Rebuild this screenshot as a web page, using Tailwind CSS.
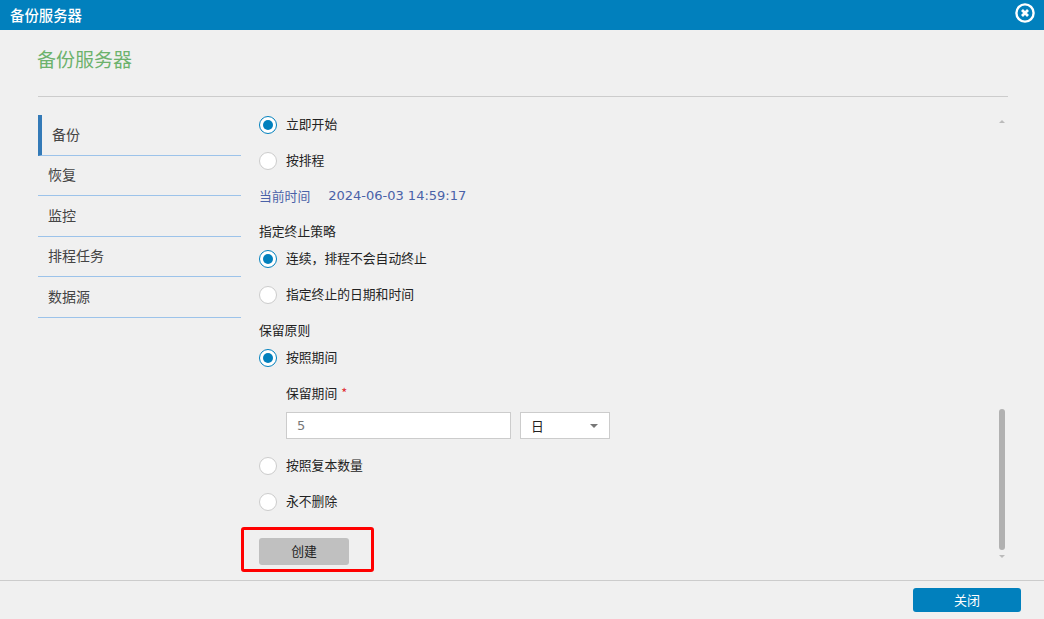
<!DOCTYPE html>
<html lang="zh-CN">
<head>
<meta charset="utf-8">
<title>备份服务器</title>
<script src="https://cdn.jsdelivr.net/npm/@tailwindcss/browser@4"></script>
</head>
<body class="w-[1044px] h-[619px] overflow-hidden bg-[#f0f0f0] text-[#222] text-[12.8px] font-['Noto_Sans_CJK_SC',sans-serif] flex flex-col">
  <!-- Title bar -->
  <header class="h-[30px] shrink-0 bg-[#0180bd] flex items-center justify-between pl-[10px] pr-[9px] text-white text-[14.4px] font-medium">
    <span class="leading-[30px]">备份服务器</span>
    <svg class="w-5 h-5 -mt-[5px]" viewBox="0 0 20 20" fill="none" stroke="#fff">
      <circle cx="10" cy="10" r="8.6" stroke-width="2.4"/>
      <path d="M7 7l6 6M13 7l-6 6" stroke-width="2.8"/>
    </svg>
  </header>

  <div class="flex-1 min-h-0 pl-[38px] pr-[36px]">
    <h1 class="h-[67px] border-b border-[#ccc] pt-[14px] text-[19px] leading-[30px] text-[#6cb26c]"><span class="-ml-px">备份服务器</span></h1>

    <div class="flex relative">
      <!-- Side nav -->
      <nav class="w-[203px] shrink-0 mt-[18px] text-[14px] text-[#444] self-start">
        <a class="flex items-center h-[41px] pl-[10px] pb-[2px] border-l-4 border-l-[#337ab7] border-b border-b-[#9cc3ea]">备份</a>
        <a class="flex items-center h-[40px] pl-[10px] pb-[2px] border-b border-[#9cc3ea]">恢复</a>
        <a class="flex items-center h-[41px] pl-[10px] pb-[2px] border-b border-[#9cc3ea]">监控</a>
        <a class="flex items-center h-[40px] pl-[10px] pb-[2px] border-b border-[#9cc3ea]">排程任务</a>
        <a class="flex items-center h-[41px] pl-[10px] pb-[2px] border-b border-[#9cc3ea]">数据源</a>
      </nav>

      <!-- Form -->
      <section class="pl-[18px] pt-[9px] flex-1">
        <label class="flex items-center gap-[9px] h-[36px]">
          <span class="mt-[2px] w-[18px] h-[18px] rounded-full border border-[#0180bd] bg-white flex items-center justify-center"><span class="w-[10px] h-[10px] rounded-full bg-[#0180bd]"></span></span>
          <span>立即开始</span>
        </label>
        <label class="flex items-center gap-[9px] h-[36px]">
          <span class="mt-[2px] w-[18px] h-[18px] rounded-full border border-[#ccc] bg-white"></span>
          <span>按排程</span>
        </label>
        <div class="flex items-center h-[36px] text-[#4a62a8]">
          <span>当前时间</span>
          <span class="ml-[18px] font-['DejaVu_Sans',sans-serif] text-[13px]">2024-06-03 14:59:17</span>
        </div>

        <div class="mt-[4px] h-[26px] flex items-center">指定终止策略</div>
        <label class="flex items-center gap-[9px] h-[28px]">
          <span class="mt-[2px] w-[18px] h-[18px] rounded-full border border-[#0180bd] bg-white flex items-center justify-center"><span class="w-[10px] h-[10px] rounded-full bg-[#0180bd]"></span></span>
          <span>连续，排程不会自动终止</span>
        </label>
        <label class="flex items-center gap-[9px] h-[28px] mt-[8px]">
          <span class="mt-[2px] w-[18px] h-[18px] rounded-full border border-[#ccc] bg-white"></span>
          <span>指定终止的日期和时间</span>
        </label>

        <div class="mt-[8px] h-[28px] flex items-center">保留原则</div>
        <label class="flex items-center gap-[9px] h-[26px]">
          <span class="mt-[2px] w-[18px] h-[18px] rounded-full border border-[#0180bd] bg-white flex items-center justify-center"><span class="w-[10px] h-[10px] rounded-full bg-[#0180bd]"></span></span>
          <span>按照期间</span>
        </label>

        <div class="pl-[27px] mt-[10px]">
          <div class="h-[26px] flex items-center gap-[4px]">保留期间 <span class="text-[#e0262a]">*</span></div>
          <div class="flex gap-[9px] mt-[6px]">
            <input value="5" class="w-[225px] h-[27px] border border-[#ccc] bg-white px-[10px] text-[13px] text-[#777] font-['DejaVu_Sans',sans-serif]">
            <div class="w-[90px] h-[27px] border border-[#ccc] bg-white flex items-center justify-between pl-[10px] pr-[11px]">
              <span>日</span>
              <span class="w-0 h-0 border-x-[4px] border-x-transparent border-t-[4px] border-t-[#777]"></span>
            </div>
          </div>
        </div>

        <label class="flex items-center gap-[9px] h-[36px] mt-[8px]">
          <span class="mt-[2px] w-[18px] h-[18px] rounded-full border border-[#ccc] bg-white"></span>
          <span>按照复本数量</span>
        </label>
        <label class="flex items-center gap-[9px] h-[36px]">
          <span class="mt-[2px] w-[18px] h-[18px] rounded-full border border-[#ccc] bg-white"></span>
          <span>永不删除</span>
        </label>

        <div class="relative mt-[19px] w-[90px]">
          <button class="w-[90px] h-[27px] pb-[2px] rounded-[3px] bg-[#c0c0c0] text-[#222] text-[12.8px]">创建</button>
          <!-- red annotation box -->
          <div class="absolute -left-[18px] -top-[11px] w-[133px] h-[45px] border-[3px] border-[#f00] rounded-[3px]"></div>
        </div>
      </section>

      <!-- Scrollbar -->
      <div class="absolute left-[961px] top-0 w-[6px] h-[470px]">
        <span class="absolute left-0 top-[23px] w-0 h-0 border-x-[3px] border-x-transparent border-b-[3px] border-b-[#bbb]"></span>
        <span class="absolute left-0 top-[312px] w-[6px] h-[141px] rounded-[3px] bg-[#b1b1b1]"></span>
        <span class="absolute left-0 top-[458px] w-0 h-0 border-x-[3px] border-x-transparent border-t-[3px] border-t-[#bbb]"></span>
      </div>
    </div>
  </div>

  <!-- Footer -->
  <footer class="h-[39px] shrink-0 border-t border-[#ccc] flex items-start justify-end pt-[7px] pr-[23px]">
    <button class="w-[108px] h-[24px] rounded-[3px] bg-[#0180bd] text-white text-[13px] leading-[24px]">关闭</button>
  </footer>
</body>
</html>
